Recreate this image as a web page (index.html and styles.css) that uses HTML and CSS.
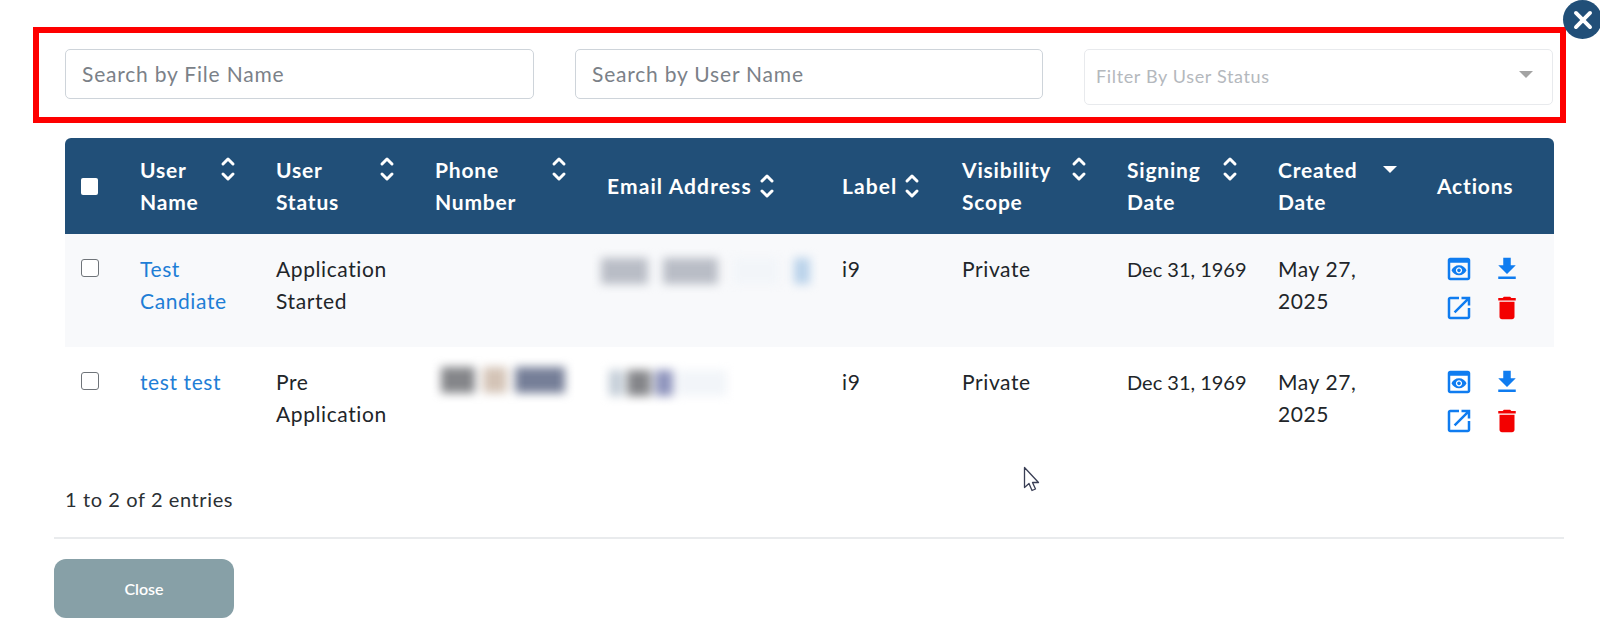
FILE: index.html
```html
<!DOCTYPE html>
<html lang="en">
<head>
<meta charset="utf-8">
<title>Files</title>
<link rel="stylesheet" href="styles.css">
</head>
<body>
<svg class="defs" width="0" height="0" aria-hidden="true">
  <symbol id="i-eye" viewBox="0 0 24 24"><path d="M19 3H5c-1.11 0-2 .9-2 2v14c0 1.1.89 2 2 2h14c1.1 0 2-.9 2-2V5c0-1.1-.89-2-2-2zm0 16H5V7h14v12zm-5.5-6c0 .83-.67 1.5-1.5 1.5s-1.5-.67-1.5-1.5.67-1.5 1.5-1.5 1.5.67 1.5 1.5zM12 9c-2.73 0-5.06 1.66-6 4 .94 2.34 3.27 4 6 4s5.06-1.66 6-4c-.94-2.34-3.27-4-6-4zm0 6.5c-1.38 0-2.5-1.12-2.5-2.5s1.12-2.5 2.5-2.5 2.5 1.12 2.5 2.5-1.12 2.5-2.5 2.5z"/></symbol>
  <symbol id="i-down" viewBox="0 0 24 24"><path d="M19 9h-4V3H9v6H5l7 7 7-7zM5 18v2h14v-2H5z"/></symbol>
  <symbol id="i-open" viewBox="0 0 24 24"><path d="M19 19H5V5h7V3H5c-1.11 0-2 .9-2 2v14c0 1.1.89 2 2 2h14c1.1 0 2-.9 2-2v-7h-2v7zM14 3v2h3.59l-9.83 9.83 1.41 1.41L19 6.41V10h2V3h-7z"/></symbol>
  <symbol id="i-del" viewBox="0 0 24 24"><path d="M6 19c0 1.1.9 2 2 2h8c1.1 0 2-.9 2-2V7H6v12zM19 4h-3.5l-1-1h-5l-1 1H5v2h14V4z"/></symbol>
  <symbol id="i-sort" viewBox="0 0 16 30"><path d="M3 10l5-5 5 5M3 20l5 5 5-5" fill="none" stroke="currentColor" stroke-width="3" stroke-linecap="round" stroke-linejoin="round"/></symbol>
</svg>

<main class="modal">
  <button class="dismiss" type="button" aria-label="Close">
    <svg viewBox="0 0 24 24" width="26" height="26"><path d="M5.5 5.500l13 13M18.500 5.500l-13 13" fill="none" stroke="#fff" stroke-width="3.600" stroke-linecap="round"/></svg>
  </button>

  <section class="filters">
    <input class="field" type="text" placeholder="Search by File Name">
    <input class="field" type="text" placeholder="Search by User Name">
    <div class="select">
      <span>Filter By User Status</span>
      <i class="select-caret"></i>
    </div>
  </section>

  <table class="grid">
    <colgroup>
      <col class="c-check"><col class="c-name"><col class="c-status"><col class="c-phone"><col class="c-email"><col class="c-label"><col class="c-scope"><col class="c-sign"><col class="c-created"><col class="c-actions">
    </colgroup>
    <thead>
      <tr>
        <th><input class="check check-head" type="checkbox" aria-label="Select all"></th>
        <th><div class="head-split"><span>User<br>Name</span><svg class="sort"><use href="#i-sort"/></svg></div></th>
        <th><div class="head-split"><span>User<br>Status</span><svg class="sort"><use href="#i-sort"/></svg></div></th>
        <th><div class="head-split"><span>Phone<br>Number</span><svg class="sort"><use href="#i-sort"/></svg></div></th>
        <th><div class="head-inline"><span>Email Address</span><svg class="sort"><use href="#i-sort"/></svg></div></th>
        <th><div class="head-inline"><span>Label</span><svg class="sort"><use href="#i-sort"/></svg></div></th>
        <th><div class="head-split"><span>Visibility<br>Scope</span><svg class="sort"><use href="#i-sort"/></svg></div></th>
        <th><div class="head-split"><span>Signing<br>Date</span><svg class="sort"><use href="#i-sort"/></svg></div></th>
        <th><div class="head-split"><span>Created<br>Date</span><i class="sort-active"></i></div></th>
        <th>Actions</th>
      </tr>
    </thead>
    <tbody>
      <tr class="odd">
        <td><input class="check" type="checkbox" aria-label="Select row"></td>
        <td><a href="#">Test Candiate</a></td>
        <td>Application Started</td>
        <td></td>
        <td>
          <div class="smudge smudge-a">
            <span class="s s-grey s-52"></span><span class="s s-grey s-60"></span><span class="s s-pale s-50"></span><span class="s s-blue s-18"></span>
          </div>
        </td>
        <td>i9</td>
        <td>Private</td>
        <td class="date">Dec 31, 1969</td>
        <td>May 27, 2025</td>
        <td>
          <div class="actions">
            <svg class="ic ic-blue"><use href="#i-eye"/></svg>
            <svg class="ic ic-blue"><use href="#i-down"/></svg>
            <svg class="ic ic-blue"><use href="#i-open"/></svg>
            <svg class="ic ic-red"><use href="#i-del"/></svg>
          </div>
        </td>
      </tr>
      <tr>
        <td><input class="check" type="checkbox" aria-label="Select row"></td>
        <td><a href="#">test test</a></td>
        <td>Pre Application</td>
        <td>
          <div class="smudge smudge-b">
            <span class="s s-dark s-34"></span><span class="s s-tan s-24"></span><span class="s s-slate s-50"></span>
          </div>
        </td>
        <td>
          <div class="smudge smudge-c">
            <span class="s s-pale2 s-14"></span><span class="s s-dark s-24"></span><span class="s s-violet s-18"></span><span class="s s-pale s-50"></span>
          </div>
        </td>
        <td>i9</td>
        <td>Private</td>
        <td class="date">Dec 31, 1969</td>
        <td>May 27, 2025</td>
        <td>
          <div class="actions">
            <svg class="ic ic-blue"><use href="#i-eye"/></svg>
            <svg class="ic ic-blue"><use href="#i-down"/></svg>
            <svg class="ic ic-blue"><use href="#i-open"/></svg>
            <svg class="ic ic-red"><use href="#i-del"/></svg>
          </div>
        </td>
      </tr>
    </tbody>
  </table>

  <p class="entries">1 to 2 of 2 entries</p>
  <footer class="foot">
    <button class="close-btn" type="button">Close</button>
  </footer>

  <svg class="cursor" viewBox="0 0 18 28" width="18" height="28"><path d="M1.500 1.500v20l4.500-4 3 7 3.500-1.500-3-6.500h6z" fill="#fff" stroke="#3a3f55" stroke-width="1.300" stroke-linejoin="round"/></svg>
</main>
</body>
</html>
```
FILE: styles.css
```css
* { box-sizing: border-box; }
html, body { margin: 0; padding: 0; height: 100%; overflow: hidden; background: #fff; }
body { font-family: "Lato", "Open Sans", sans-serif; color: #212529; font-size: 20px; }
.defs { position: absolute; }
.modal { position: relative; height: 620px; padding-top: 27px; }

.dismiss {
  position: absolute; top: 0; left: 1563px; width: 39px; height: 39px; padding: 0;
  display: flex; align-items: center; justify-content: center;
  border: 0; border-radius: 50%; background: #214f78; z-index: 2;
}

.filters {
  margin: 0 34px 0 33px; height: 96px;
  border: 6px solid #fe0000;
  padding: 16px 7px 0 26px;
  display: grid; grid-template-columns: 469px 468px 469px; column-gap: 41px; align-items: start;
}
.field {
  height: 50px; width: 100%; padding: 0 16px 2px;
  border: 1px solid #ced4da; border-radius: 5px; background: #fff;
  font: inherit; font-size: 21px; letter-spacing: .8px; color: #212529;
}
.field::placeholder { color: #7b8188; opacity: 1; }
.select {
  height: 56px; padding: 0 19px 2px 11px;
  border: 1px solid #e8eaed; border-radius: 5px;
  display: flex; align-items: center; justify-content: space-between;
  font-size: 18px; letter-spacing: .65px; color: #b4b8bd;
}
.select-caret { width: 0; height: 0; margin-bottom: 4px; border: 7px solid transparent; border-top-color: #a3a3a3; border-bottom: 0; }

.grid {
  margin: 15px 0 0 65px; width: 1489px; table-layout: fixed;
  border-collapse: separate; border-spacing: 0;
  font-size: 21px; letter-spacing: .6px; line-height: 32px;
}
.c-check { width: 59px; } .c-name { width: 136px; } .c-status { width: 159px; } .c-phone { width: 172px; }
.c-email { width: 235px; } .c-label { width: 120px; } .c-scope { width: 165px; } .c-sign { width: 151px; }
.c-created { width: 159px; } .c-actions { width: 133px; }

.grid th {
  height: 96px; padding: 0 16px; background: #214f78; color: #fff;
  font-weight: 700; text-align: left; vertical-align: middle; letter-spacing: .8px;
}
.grid th:first-child { border-top-left-radius: 6px; }
.grid th:last-child { border-top-right-radius: 6px; }
.head-split { display: flex; justify-content: space-between; align-items: flex-start; padding-right: 8px; }
.head-inline { display: flex; align-items: center; gap: 7px; letter-spacing: 1.1px; }
.sort { display: block; width: 16px; height: 30px; color: #fff; }
.sort-active { width: 0; height: 0; margin: 12px 0 0; border: 7px solid transparent; border-top-color: #fff; border-bottom: 0; }

.grid td { height: 113px; padding: 19px 16px 15px; vertical-align: top; color: #212529; }
.grid tr.odd td { background: #f8f9fb; }
.grid a { color: #1e7ed6; text-decoration: none; }
.grid td.date { white-space: nowrap; padding-right: 0; font-size: 20px; letter-spacing: 0; }

.check { display: block; width: 18px; height: 18px; margin: 6px 0 0; appearance: none; background: #fff; border: 1px solid #6f7479; border-radius: 3px; }
.check-head { margin: 0; border: 0; border-radius: 2px; width: 17px; height: 17px; }

.actions { display: grid; grid-template-columns: repeat(2, 30px); grid-auto-rows: 39px; column-gap: 18px; margin-left: 7px; margin-top: -1px; }
.ic { width: 30px; height: 30px; display: block; margin-top: 2px; }
.ic-blue { fill: #0f7cf0; }
.ic-red { fill: #f30000; }

.smudge { display: flex; height: 26px; filter: blur(5px); }
.smudge-a { gap: 15px; margin: 5px 0 0 -6px; }
.smudge-b { gap: 8px; margin: 1px 0 0 6px; }
.smudge-c { gap: 4px; margin: 4px 0 0 2px; }
.s { display: block; height: 100%; }
.s-grey { background: #b9bdc6; }
.s-pale { background: #f2f5f9; }
.s-pale2 { background: #c4ced8; }
.s-blue { background: #b9d2ea; }
.s-dark { background: #85868a; }
.s-tan { background: #d4c4b7; }
.s-slate { background: #767f98; }
.s-violet { background: #8f95bd; }
.s-14 { width: 14px; } .s-18 { width: 18px; } .s-24 { width: 24px; } .s-34 { width: 34px; }
.s-50 { width: 50px; } .s-52 { width: 52px; } .s-60 { width: 60px; }

.entries { margin: 26px 0 0 65px; line-height: 26px; letter-spacing: .6px; color: #2b3034; }
.foot { margin: 25px 36px 0 54px; padding-top: 20px; border-top: 2px solid #e9ebed; }
.close-btn {
  display: block; width: 180px; height: 59px; border: 0; border-radius: 12px;
  background: #87a0a7; color: #fff; font: 600 16px "Lato", sans-serif;
}
.cursor { position: absolute; left: 1023px; top: 466px; }
```
